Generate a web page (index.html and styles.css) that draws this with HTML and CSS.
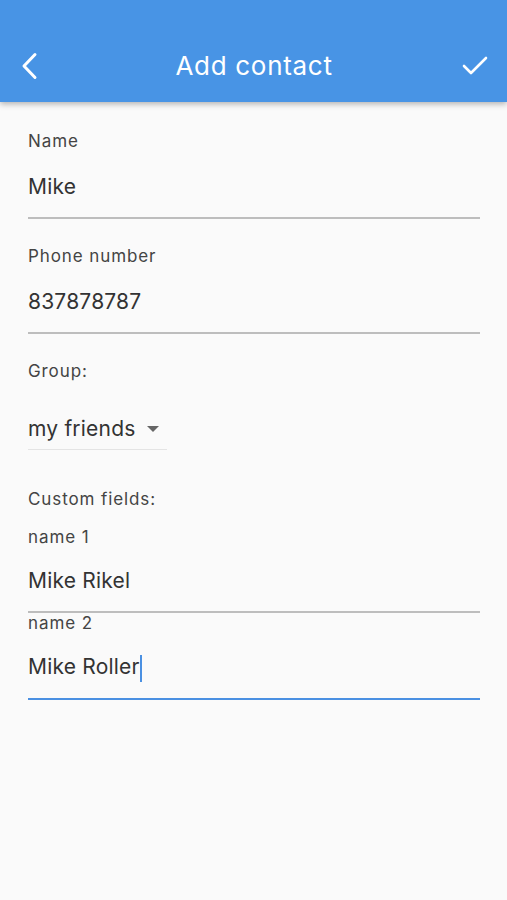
FILE: index.html
```html
<!DOCTYPE html>
<html lang="en">
<head>
    <meta charset="UTF-8">
    <meta name="viewport" content="width=device-width, initial-scale=1.0">
    <title>Add contact</title>
    <link rel="stylesheet" href="styles.css">
</head>
<body>
    <header class="app-bar">
        <button type="button" class="bar-btn back-btn" aria-label="Back">
            <svg width="18" height="28" viewBox="0 0 18 28">
                <polyline points="15,2.5 4,14 15,25.5" fill="none" stroke="#fff" stroke-width="3" stroke-linecap="round" stroke-linejoin="round"/>
            </svg>
        </button>
        <h1 class="title">Add contact</h1>
        <button type="button" class="bar-btn save-btn" aria-label="Save">
            <svg width="28" height="22" viewBox="0 0 28 22">
                <polyline points="3,11 10,18 25,3" fill="none" stroke="#fff" stroke-width="2.6" stroke-linecap="round" stroke-linejoin="round"/>
            </svg>
        </button>
    </header>

    <form class="form" id="contactForm">
        <div class="field">
            <label class="label">Name</label>
            <div class="value">Mike</div>
        </div>

        <div class="field">
            <label class="label">Phone number</label>
            <div class="value">837878787</div>
        </div>

        <div class="group">
            <div class="label">Group:</div>
            <div class="dropdown">
                <span>my friends</span>
                <span class="caret"></span>
            </div>
        </div>

        <div class="custom">
            <div class="label">Custom fields:</div>
            <div class="field small top">
                <label class="label">name 1</label>
                <div class="value">Mike Rikel</div>
            </div>
            <div class="field small focused">
                <label class="label">name 2</label>
                <div class="value">Mike Roller<span class="cursor"></span></div>
            </div>
        </div>
    </form>
</body>
</html>
```

FILE: styles.css
```css
body {
    margin: 0;
    background-color: #fafafa;
    font-family: Inter, "Noto Sans", sans-serif;
    color: #333;
}
.app-bar {
    height: 102px;
    background-color: #4894e5;
    box-shadow: 0 2px 6px rgba(0, 0, 0, 0.3);
    display: flex;
    align-items: flex-end;
    justify-content: space-between;
    padding: 0 14px 19px 15px;
    box-sizing: border-box;
    position: relative;
}
.bar-btn {
    background: none;
    border: none;
    padding: 0;
    width: 32px;
    height: 34px;
    display: flex;
    align-items: center;
    justify-content: center;
    cursor: pointer;
}
.back-btn {
    justify-content: flex-start;
    padding-left: 5px;
}
.save-btn {
    width: 36px;
}
.title {
    margin: 0 0 0 4px;
    color: #fff;
    font-size: 26px;
    font-weight: 400;
    line-height: 34px;
    letter-spacing: 0.7px;
}
.form {
    padding: 27px 27px 0 28px;
}
.label {
    display: block;
    font-size: 17px;
    line-height: 24px;
    color: #444;
    letter-spacing: 0.9px;
}
.value {
    font-size: 21px;
    line-height: 30px;
    margin-top: 19px;
    padding-bottom: 15px;
    border-bottom: 2px solid #bdbdbd;
    letter-spacing: 0.2px;
}
.field {
    margin-bottom: 25px;
}
.group .dropdown {
    display: inline-flex;
    align-items: center;
    gap: 12px;
    font-size: 21px;
    line-height: 30px;
    margin-top: 31px;
    padding-bottom: 5px;
    padding-right: 8px;
    border-bottom: 1px solid #e4e4e4;
    letter-spacing: 0.2px;
}
.caret {
    width: 0;
    height: 0;
    border-left: 6px solid transparent;
    border-right: 6px solid transparent;
    border-top: 6px solid #666;
}
.custom {
    margin-top: 37px;
}
.field.small {
    margin-bottom: 0;
}
.field.small .label {
    line-height: 20px;
}
.field.small.top {
    margin-top: 16px;
}
.field.small .value {
    margin-top: 19px;
}
.focused .value {
    margin-top: 20px;
    padding-bottom: 16px;
    border-bottom-color: #4a90e2;
}
.cursor {
    display: inline-block;
    width: 2px;
    height: 27px;
    background-color: #4a90e2;
    vertical-align: middle;
}
```
